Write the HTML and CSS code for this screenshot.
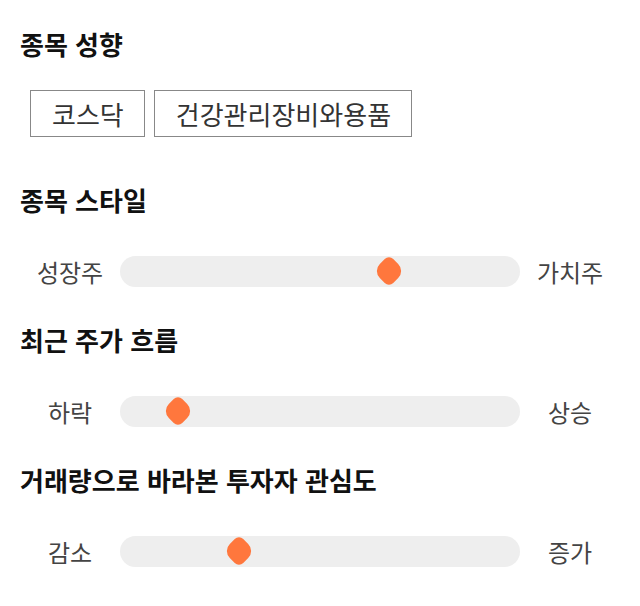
FILE: index.html
```html
<!DOCTYPE html>
<html lang="ko">
<head>
    <meta charset="UTF-8">
    <meta name="viewport" content="width=device-width, initial-scale=1.0">
    <title>종목 성향</title>
    <link rel="stylesheet" href="styles.css">
</head>
<body>
    <div class="section section-tags">
        <h2>종목 성향</h2>
        <div class="tag-list">
            <span class="tag">코스닥</span>
            <span class="tag">건강관리장비와용품</span>
        </div>
    </div>

    <div class="section">
        <h2>종목 스타일</h2>
        <div class="scale">
            <span class="scale-label">성장주</span>
            <div class="scale-track">
                <span class="scale-thumb" style="left: 67.2%"></span>
            </div>
            <span class="scale-label">가치주</span>
        </div>
    </div>

    <div class="section">
        <h2>최근 주가 흐름</h2>
        <div class="scale">
            <span class="scale-label">하락</span>
            <div class="scale-track">
                <span class="scale-thumb" style="left: 14.5%"></span>
            </div>
            <span class="scale-label">상승</span>
        </div>
    </div>

    <div class="section">
        <h2>거래량으로 바라본 투자자 관심도</h2>
        <div class="scale">
            <span class="scale-label">감소</span>
            <div class="scale-track">
                <span class="scale-thumb" style="left: 29.8%"></span>
            </div>
            <span class="scale-label">증가</span>
        </div>
    </div>
</body>
</html>
```

FILE: styles.css
```css
body {
    font-family: "Noto Sans CJK KR", "Noto Sans", sans-serif;
    margin: 0;
    padding: 29px 20px 0;
    background-color: white;
    color: #333;
}
h2 {
    font-size: 26px;
    line-height: 30px;
    font-weight: bold;
    color: #111;
    margin: 0 0 36px;
}
.section {
    margin-bottom: 34px;
}
.section-tags h2 {
    margin-bottom: 31px;
}
.section-tags {
    margin-bottom: 48px;
}
.tag-list {
    display: flex;
    gap: 9px;
    padding-left: 10px;
}
.tag {
    display: inline-block;
    height: 47px;
    line-height: 45px;
    padding: 0 20px 0 21px;
    border: 1px solid #888;
    box-sizing: border-box;
    font-size: 26px;
    color: #333;
}
.scale {
    display: flex;
    align-items: center;
    height: 40px;
}
.scale-label {
    width: 100px;
    text-align: center;
    font-size: 24px;
    color: #444;
}
.scale-track {
    position: relative;
    flex: 1;
    height: 31px;
    border-radius: 16px;
    background-color: #eeeeee;
}
.scale-thumb {
    position: absolute;
    top: 50%;
    width: 23px;
    height: 23px;
    background-color: #ff773d;
    border-radius: 6px 10px 6px 10px;
    transform: translate(-50%, -50%) rotate(45deg);
}
```
